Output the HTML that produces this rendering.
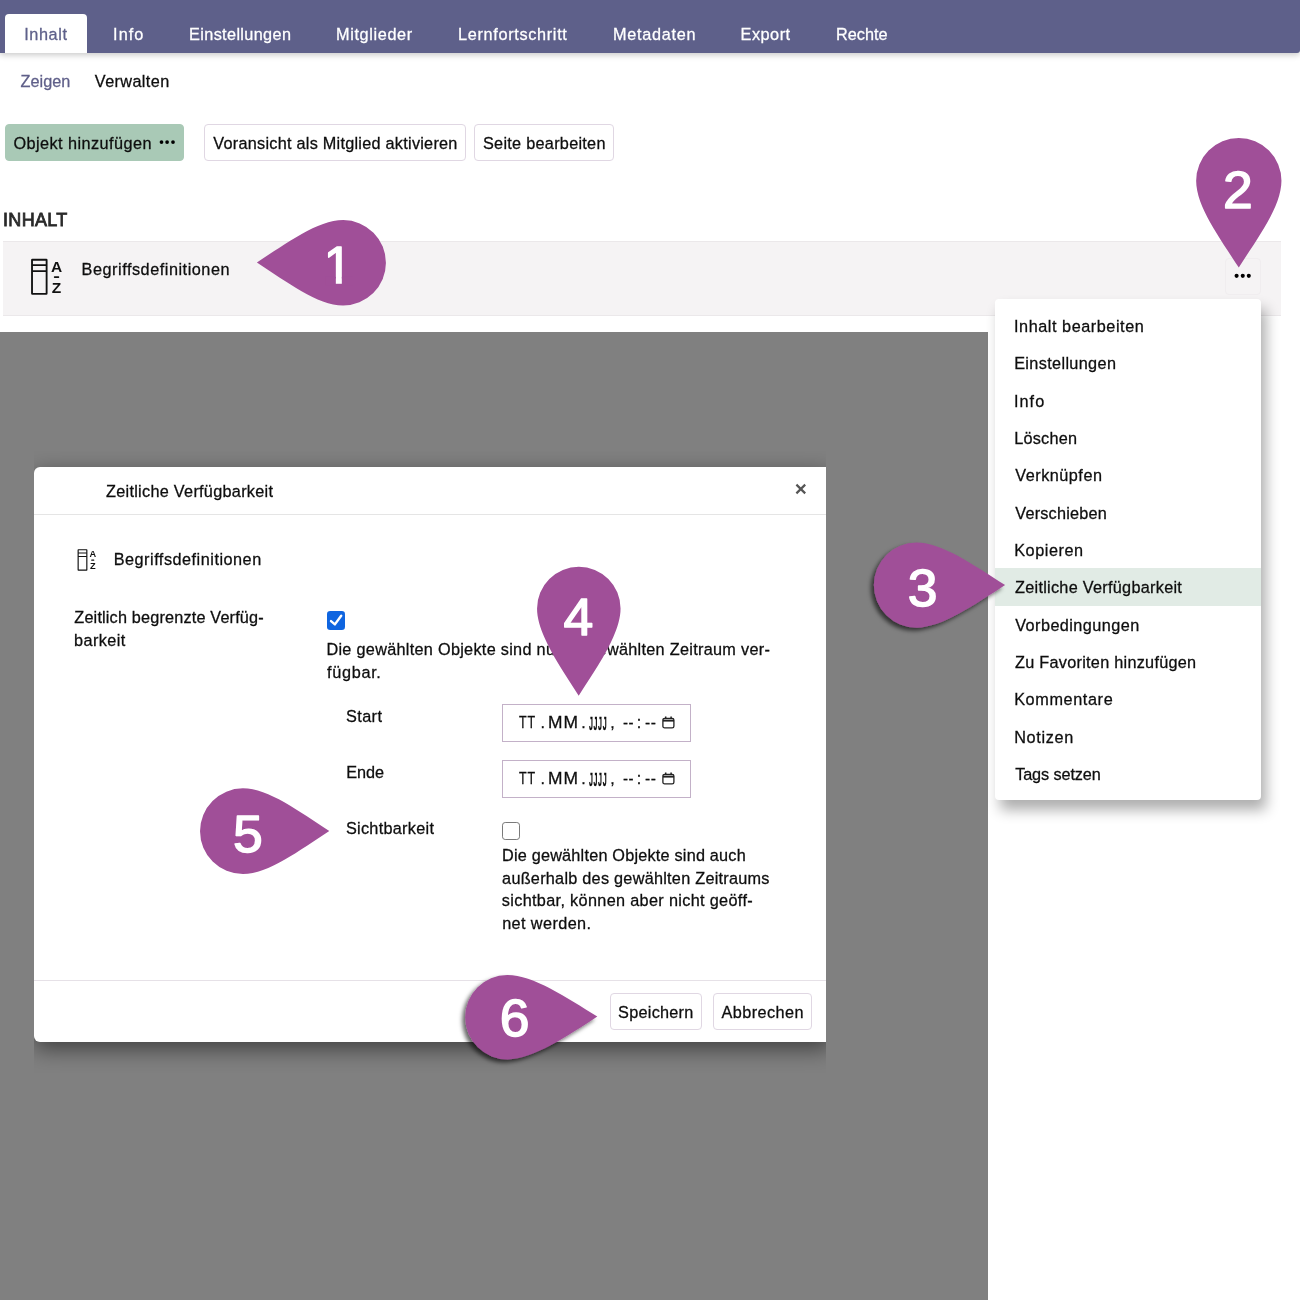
<!DOCTYPE html>
<html lang="de"><head><meta charset="utf-8"><title>Zeitliche Verfügbarkeit</title>
<style>
html,body{margin:0;padding:0;}
body{width:1300px;height:1300px;position:relative;overflow:hidden;background:#fff;font-family:"Liberation Sans",sans-serif;}
.abs{position:absolute;}
svg{will-change:transform;}
.t{position:absolute;white-space:pre;line-height:20px;font-size:16px;-webkit-text-stroke:0.28px currentColor;}
.btn{position:absolute;box-sizing:border-box;border:1px solid #e0d7e3;border-radius:4px;background:#fff;}
#topbar{left:0;top:0;width:1300px;height:52.8px;background:#5e608a;border-bottom-right-radius:3px;box-shadow:0 2px 6px rgba(0,0,0,.22);}
#tabactive{left:5px;top:13.9px;width:82.2px;height:39px;background:#fff;border-radius:4px 4px 0 0;}
#row{left:3px;top:241px;width:1278px;height:74.5px;background:#f5f3f4;border-top:1px solid #ebe8ea;border-bottom:1px solid #ebe8ea;box-sizing:border-box;}
#overlay{left:0;top:332px;width:988px;height:968px;background:#808080;}
#modalimg{left:34px;top:451px;width:792px;height:621.5px;overflow:hidden;}
#modal{left:0;top:16px;width:797px;height:575px;background:#fff;border-radius:6px;box-shadow:0 7px 22px rgba(0,0,0,.5);}
#menu{left:995px;top:299px;width:266px;height:501px;background:#fff;border-radius:4px;box-shadow:5px 10px 14px rgba(0,0,0,.32);}
#hl{left:995px;top:568.2px;width:266px;height:37.6px;background:#e1ebe5;}
#txt{position:absolute;left:0;top:0;width:1300px;height:1300px;will-change:transform;}
.chk{position:absolute;box-sizing:border-box;border-radius:3.2px;}
.inp{position:absolute;box-sizing:border-box;border:1px solid #c3b1c8;background:#fff;}
</style></head><body>
<div id="topbar" class="abs"></div><div id="tabactive" class="abs"></div>
<div class="btn" style="left:5px;top:123.8px;width:179px;height:37px;background:#a9c9b6;border-color:#a9c9b6;border-radius:4px"></div>
<svg class="abs" style="left:158px;top:139px" width="20" height="8"><circle cx="3.5" cy="3.1" r="1.85"/><circle cx="9.1" cy="3.1" r="1.85"/><circle cx="15" cy="3.1" r="1.85"/></svg>
<div class="btn" style="left:204px;top:123.8px;width:261.7px;height:37px"></div>
<div class="btn" style="left:474px;top:123.8px;width:139.6px;height:37px"></div>
<div id="row" class="abs"></div>
<svg class="abs" style="left:20.00px;top:250.00px" width="60.00" height="55.00" viewBox="20 250 60 55">
<rect x="32.02" y="259.72" width="14.6" height="34.15" rx="0.35" fill="none" stroke="#111" stroke-width="1.85"/>
<path d="M32 265.1h14.6M32 271.1h14.6" stroke="#111" stroke-width="1.70" fill="none"/>
<text x="56.6" y="271.9" font-size="15.5" font-weight="700" text-anchor="middle" fill="#111" font-family="Liberation Sans, sans-serif">A</text>
<rect x="53.9" y="276.15" width="5.3" height="1.8" rx="0.6" fill="#111"/>
<text x="56.5" y="292.5" font-size="15.5" font-weight="700" text-anchor="middle" fill="#111" font-family="Liberation Sans, sans-serif">Z</text>
</svg>
<div class="btn" style="left:1224.6px;top:258.1px;width:36.4px;height:36.6px;background:#f5f3f4;border-color:#f0edef"></div>
<svg class="abs" style="left:1233px;top:272px" width="20" height="8"><circle cx="3.6" cy="3.85" r="2.05"/><circle cx="9.75" cy="3.85" r="2.05"/><circle cx="15.8" cy="3.85" r="2.05"/></svg>
<div id="overlay" class="abs"></div>
<div id="modalimg" class="abs"><div id="modal" class="abs"></div></div>
<div class="abs" style="left:34px;top:514px;width:792px;height:1px;background:#e5e5e5"></div>
<div class="abs" style="left:34px;top:980px;width:792px;height:1px;background:#e6e1e7"></div>
<svg class="abs" style="left:795px;top:483px" width="12" height="12" viewBox="0 0 12 12"><path d="M1.4 1.6l8.8 8.8M10.2 1.6l-8.8 8.8" stroke="#555" stroke-width="2.2" fill="none"/></svg>
<svg class="abs" style="left:71.20px;top:544.35px" width="35.70" height="32.73" viewBox="20 250 60 55">
<rect x="32.02" y="259.72" width="14.6" height="34.15" rx="0.35" fill="none" stroke="#111" stroke-width="1.95"/>
<path d="M32 265.1h14.6M32 271.1h14.6" stroke="#111" stroke-width="1.80" fill="none"/>
<text x="56.6" y="271.9" font-size="15.5" font-weight="700" text-anchor="middle" fill="#111" font-family="Liberation Sans, sans-serif">A</text>
<rect x="53.9" y="276.15" width="5.3" height="1.8" rx="0.6" fill="#111"/>
<text x="56.5" y="292.5" font-size="15.5" font-weight="700" text-anchor="middle" fill="#111" font-family="Liberation Sans, sans-serif">Z</text>
</svg>
<div class="chk" style="left:327px;top:611.4px;width:18px;height:18.3px;background:#0f65e0"></div>
<svg class="abs" style="left:327px;top:611.4px" width="18" height="18.3" viewBox="0 0 18 18.3"><path d="M4 10.1l3.9 3.3 6.3-8.7" stroke="#fff" stroke-width="2.4" fill="none" stroke-linecap="round" stroke-linejoin="round"/></svg>
<div class="inp" style="left:502px;top:703.5px;width:189px;height:38px"></div>
<div class="inp" style="left:502px;top:759.9px;width:189px;height:38px"></div>
<svg class="abs" style="left:662.2px;top:716.4px" width="13" height="13" viewBox="0 0 13 13"><rect x="0.9" y="2.3" width="11" height="9.6" rx="1.7" fill="none" stroke="#222" stroke-width="1.3"/><path d="M1 4.6h11" stroke="#222" stroke-width="2"/><path d="M3.7 0.5v2M9.1 0.5v2" stroke="#222" stroke-width="1.5"/></svg><svg class="abs" style="left:662.2px;top:772.4px" width="13" height="13" viewBox="0 0 13 13"><rect x="0.9" y="2.3" width="11" height="9.6" rx="1.7" fill="none" stroke="#222" stroke-width="1.3"/><path d="M1 4.6h11" stroke="#222" stroke-width="2"/><path d="M3.7 0.5v2M9.1 0.5v2" stroke="#222" stroke-width="1.5"/></svg>
<div class="chk" style="left:502.3px;top:822.2px;width:17.4px;height:17.4px;background:#fff;border:1.3px solid #7a7a7a"></div>
<div class="btn" style="left:610px;top:993px;width:91.8px;height:37px"></div>
<div class="btn" style="left:713.2px;top:993px;width:98.7px;height:37px"></div>
<div id="menu" class="abs"></div><div id="hl" class="abs"></div>
<div id="txt">
<span class="t" style="left:24.22px;top:24.0px;font-size:16.25px;color:#5e608a;letter-spacing:0.594px;">Inhalt</span>
<span class="t" style="left:113.12px;top:24.0px;font-size:16.25px;color:#fff;letter-spacing:1.062px;">Info</span>
<span class="t" style="left:189.08px;top:24.0px;font-size:16.25px;color:#fff;letter-spacing:0.356px;">Einstellungen</span>
<span class="t" style="left:336.08px;top:24.0px;font-size:16.25px;color:#fff;letter-spacing:0.626px;">Mitglieder</span>
<span class="t" style="left:458.08px;top:24.0px;font-size:16.25px;color:#fff;letter-spacing:0.673px;">Lernfortschritt</span>
<span class="t" style="left:613.08px;top:24.0px;font-size:16.25px;color:#fff;letter-spacing:0.695px;">Metadaten</span>
<span class="t" style="left:740.58px;top:24.0px;font-size:16.25px;color:#fff;letter-spacing:0.503px;">Export</span>
<span class="t" style="left:836.08px;top:24.0px;font-size:16.25px;color:#fff;letter-spacing:0.003px;">Rechte</span>
<span class="t" style="left:20.61px;top:71.0px;font-size:16.25px;color:#5f5f89;letter-spacing:0.006px;">Zeigen</span>
<span class="t" style="left:94.85px;top:71.0px;font-size:16.25px;color:#0e0e0e;letter-spacing:0.373px;">Verwalten</span>
<span class="t" style="left:13.40px;top:133.0px;font-size:16.25px;color:#0e0e0e;letter-spacing:0.444px;">Objekt hinzufügen</span>
<span class="t" style="left:213.35px;top:133.0px;font-size:16.25px;color:#0e0e0e;letter-spacing:0.252px;">Voransicht als Mitglied aktivieren</span>
<span class="t" style="left:482.98px;top:133.0px;font-size:16.25px;color:#0e0e0e;letter-spacing:0.277px;">Seite bearbeiten</span>
<span class="t" style="left:2.97px;top:210.0px;font-size:18px;color:#2a2a2a;letter-spacing:0.331px;-webkit-text-stroke:0.8px #2a2a2a;">INHALT</span>
<span class="t" style="left:81.58px;top:259.0px;font-size:16.25px;color:#0e0e0e;letter-spacing:0.527px;">Begriffsdefinitionen</span>
<span class="t" style="left:1014.02px;top:316.0px;font-size:16.25px;color:#0e0e0e;letter-spacing:0.542px;">Inhalt bearbeiten</span>
<span class="t" style="left:1014.18px;top:353.0px;font-size:16.25px;color:#0e0e0e;letter-spacing:0.348px;">Einstellungen</span>
<span class="t" style="left:1014.02px;top:391.0px;font-size:16.25px;color:#0e0e0e;letter-spacing:1.028px;">Info</span>
<span class="t" style="left:1014.18px;top:428.0px;font-size:16.25px;color:#0e0e0e;letter-spacing:0.229px;">Löschen</span>
<span class="t" style="left:1015.25px;top:465.0px;font-size:16.25px;color:#0e0e0e;letter-spacing:0.498px;">Verknüpfen</span>
<span class="t" style="left:1015.25px;top:503.0px;font-size:16.25px;color:#0e0e0e;letter-spacing:0.211px;">Verschieben</span>
<span class="t" style="left:1014.18px;top:540.0px;font-size:16.25px;color:#0e0e0e;letter-spacing:0.545px;">Kopieren</span>
<span class="t" style="left:1015.01px;top:577.0px;font-size:16.25px;color:#0e0e0e;letter-spacing:0.276px;">Zeitliche Verfügbarkeit</span>
<span class="t" style="left:1015.25px;top:615.0px;font-size:16.25px;color:#0e0e0e;letter-spacing:0.430px;">Vorbedingungen</span>
<span class="t" style="left:1015.01px;top:652.0px;font-size:16.25px;color:#0e0e0e;letter-spacing:0.269px;">Zu Favoriten hinzufügen</span>
<span class="t" style="left:1014.18px;top:689.0px;font-size:16.25px;color:#0e0e0e;letter-spacing:0.609px;">Kommentare</span>
<span class="t" style="left:1014.18px;top:727.0px;font-size:16.25px;color:#0e0e0e;letter-spacing:0.669px;">Notizen</span>
<span class="t" style="left:1015.16px;top:764.0px;font-size:16.25px;color:#0e0e0e;letter-spacing:-0.111px;">Tags setzen</span>
<span class="t" style="left:106.01px;top:481.0px;font-size:16.25px;color:#0e0e0e;letter-spacing:0.281px;">Zeitliche Verfügbarkeit</span>
<span class="t" style="left:113.68px;top:549.0px;font-size:16.25px;color:#0e0e0e;letter-spacing:0.506px;">Begriffsdefinitionen</span>
<span class="t" style="left:74.31px;top:607.0px;font-size:16.25px;color:#0e0e0e;letter-spacing:0.169px;">Zeitlich begrenzte Verfüg-</span>
<span class="t" style="left:74.00px;top:630.0px;font-size:16.25px;color:#0e0e0e;letter-spacing:0.415px;">barkeit</span>
<span class="t" style="left:326.43px;top:639.0px;font-size:16.25px;color:#0e0e0e;letter-spacing:0.289px;">Die gewählten Objekte sind nur im gewählten Zeitraum ver-</span>
<span class="t" style="left:327.08px;top:662.0px;font-size:16.25px;color:#0e0e0e;letter-spacing:0.682px;">fügbar.</span>
<span class="t" style="left:345.98px;top:706.0px;font-size:16.25px;color:#0e0e0e;letter-spacing:0.406px;">Start</span>
<span class="t" style="left:346.28px;top:762.0px;font-size:16.25px;color:#0e0e0e;letter-spacing:-0.040px;">Ende</span>
<span class="t" style="left:345.98px;top:818.0px;font-size:16.25px;color:#0e0e0e;letter-spacing:0.275px;">Sichtbarkeit</span>
<span class="t" style="left:501.98px;top:845.0px;font-size:16.25px;color:#0e0e0e;letter-spacing:0.206px;">Die gewählten Objekte sind auch</span>
<span class="t" style="left:502.10px;top:868.0px;font-size:16.25px;color:#0e0e0e;letter-spacing:0.255px;">außerhalb des gewählten Zeitraums</span>
<span class="t" style="left:501.80px;top:890.0px;font-size:16.25px;color:#0e0e0e;letter-spacing:0.329px;">sichtbar, können aber nicht geöff-</span>
<span class="t" style="left:502.17px;top:913.0px;font-size:16.25px;color:#0e0e0e;letter-spacing:0.395px;">net werden.</span>
<span class="t" style="left:618.08px;top:1002.0px;font-size:16.25px;color:#0e0e0e;letter-spacing:0.257px;">Speichern</span>
<span class="t" style="left:721.49px;top:1002.0px;font-size:16.25px;color:#0e0e0e;letter-spacing:0.433px;">Abbrechen</span>
<span class="t" style="left:518.70px;top:713.0px;font-size:16px;color:#0e0e0e;letter-spacing:1.2px;transform-origin:0 50%;transform:scaleX(0.779)">TT</span>
<span class="t" style="left:540.56px;top:713.0px;font-size:16px;color:#0e0e0e;letter-spacing:0px;transform-origin:0 50%;transform:scaleX(1.000)">.</span>
<span class="t" style="left:548.30px;top:713.0px;font-size:16px;color:#0e0e0e;letter-spacing:0.9px;transform-origin:0 50%;transform:scaleX(1.087)">MM</span>
<span class="t" style="left:581.36px;top:713.0px;font-size:16px;color:#0e0e0e;letter-spacing:0px;transform-origin:0 50%;transform:scaleX(1.000)">.</span>
<span class="t" style="left:589.10px;top:714.0px;font-size:18.6px;color:#0e0e0e;font-weight:700;letter-spacing:1.6px;transform-origin:0 50%;transform:scaleX(0.381)">JJJJ</span>
<span class="t" style="left:610.25px;top:713.0px;font-size:16px;color:#0e0e0e;letter-spacing:0px;transform-origin:0 50%;transform:scaleX(1.000)">,</span>
<span class="t" style="left:623.35px;top:713.0px;font-size:16px;color:#0e0e0e;letter-spacing:0.6px;transform-origin:0 50%;transform:scaleX(0.942)">--</span>
<span class="t" style="left:636.76px;top:713.0px;font-size:16px;color:#0e0e0e;letter-spacing:0px;transform-origin:0 50%;transform:scaleX(1.000)">:</span>
<span class="t" style="left:645.43px;top:713.0px;font-size:16px;color:#0e0e0e;letter-spacing:0.6px;transform-origin:0 50%;transform:scaleX(0.972)">--</span>
<span class="t" style="left:518.70px;top:769.0px;font-size:16px;color:#0e0e0e;letter-spacing:1.2px;transform-origin:0 50%;transform:scaleX(0.779)">TT</span>
<span class="t" style="left:540.56px;top:769.0px;font-size:16px;color:#0e0e0e;letter-spacing:0px;transform-origin:0 50%;transform:scaleX(1.000)">.</span>
<span class="t" style="left:548.30px;top:769.0px;font-size:16px;color:#0e0e0e;letter-spacing:0.9px;transform-origin:0 50%;transform:scaleX(1.087)">MM</span>
<span class="t" style="left:581.36px;top:769.0px;font-size:16px;color:#0e0e0e;letter-spacing:0px;transform-origin:0 50%;transform:scaleX(1.000)">.</span>
<span class="t" style="left:589.10px;top:770.0px;font-size:18.6px;color:#0e0e0e;font-weight:700;letter-spacing:1.6px;transform-origin:0 50%;transform:scaleX(0.381)">JJJJ</span>
<span class="t" style="left:610.25px;top:769.0px;font-size:16px;color:#0e0e0e;letter-spacing:0px;transform-origin:0 50%;transform:scaleX(1.000)">,</span>
<span class="t" style="left:623.35px;top:769.0px;font-size:16px;color:#0e0e0e;letter-spacing:0.6px;transform-origin:0 50%;transform:scaleX(0.942)">--</span>
<span class="t" style="left:636.76px;top:769.0px;font-size:16px;color:#0e0e0e;letter-spacing:0px;transform-origin:0 50%;transform:scaleX(1.000)">:</span>
<span class="t" style="left:645.43px;top:769.0px;font-size:16px;color:#0e0e0e;letter-spacing:0.6px;transform-origin:0 50%;transform:scaleX(0.972)">--</span>
</div>
<svg class="abs" style="left:0;top:0" width="1300" height="1300" viewBox="0 0 1300 1300">
<defs><filter id="sh" x="-30%" y="-30%" width="160%" height="160%"><feDropShadow dx="-3" dy="3" stdDeviation="2.2" flood-color="#000" flood-opacity=".6"/></filter></defs>
<path d="M256.90 262.50 C287.08 243.27 317.73 220.01 343.35 220.10 A42.7 42.7 0 1 1 343.05 305.50 C317.43 305.41 286.94 281.94 256.90 262.50 Z" fill="#a04f98"/><path d="M1238.80 267.60 C1219.49 237.52 1196.15 206.39 1196.15 180.80 A42.65 42.65 0 1 1 1281.45 180.80 C1281.45 206.39 1258.11 237.52 1238.80 267.60 Z" fill="#a04f98"/><path d="M1005.10 585.10 C975.02 604.41 942.09 627.75 916.50 627.75 A42.65 42.65 0 1 1 916.50 542.45 C942.09 542.45 975.02 565.79 1005.10 585.10 Z" fill="#a04f98" filter="url(#sh)"/><path d="M578.70 695.70 C559.83 666.24 537.02 633.50 537.05 608.45 A41.75 41.75 0 1 1 620.55 608.55 C620.52 633.60 597.63 666.28 578.70 695.70 Z" fill="#a04f98"/><path d="M329.30 831.00 C299.13 850.47 268.71 873.99 243.00 874.05 A42.85 42.85 0 1 1 242.80 788.35 C268.51 788.29 299.04 811.67 329.30 831.00 Z" fill="#a04f98"/><path d="M597.30 1016.60 C567.60 1035.95 533.16 1059.33 507.78 1059.50 A42.3 42.3 0 1 1 507.22 974.90 C532.60 974.73 567.34 997.65 597.30 1016.60 Z" fill="#a04f98" filter="url(#sh)"/><text x="323.8" y="283.1" font-size="51" fill="#fff" stroke="#fff" stroke-width="1.4" stroke-linejoin="round" font-family="Liberation Sans, sans-serif">1</text><rect x="325.3" y="276.9" width="10.53" height="8.5" fill="#a04f98"/><rect x="341.83" y="276.9" width="10.5" height="8.5" fill="#a04f98"/><text transform="translate(1237.9 207.6) scale(1.05 1.015)" x="0" y="0" font-size="51" text-anchor="middle" fill="#fff" stroke="#fff" stroke-width="1.4" stroke-linejoin="round" font-family="Liberation Sans, sans-serif">2</text><text transform="translate(922.7 605.9) scale(1.05 1.015)" x="0" y="0" font-size="51" text-anchor="middle" fill="#fff" stroke="#fff" stroke-width="1.4" stroke-linejoin="round" font-family="Liberation Sans, sans-serif">3</text><text transform="translate(578.5 635.4) scale(1.05 1.015)" x="0" y="0" font-size="51" text-anchor="middle" fill="#fff" stroke="#fff" stroke-width="1.4" stroke-linejoin="round" font-family="Liberation Sans, sans-serif">4</text><text transform="translate(247.8 851.7) scale(1.05 1.015)" x="0" y="0" font-size="51" text-anchor="middle" fill="#fff" stroke="#fff" stroke-width="1.4" stroke-linejoin="round" font-family="Liberation Sans, sans-serif">5</text><text transform="translate(514.6 1035.7) scale(1.05 1.015)" x="0" y="0" font-size="51" text-anchor="middle" fill="#fff" stroke="#fff" stroke-width="1.4" stroke-linejoin="round" font-family="Liberation Sans, sans-serif">6</text>
</svg>
</body></html>
